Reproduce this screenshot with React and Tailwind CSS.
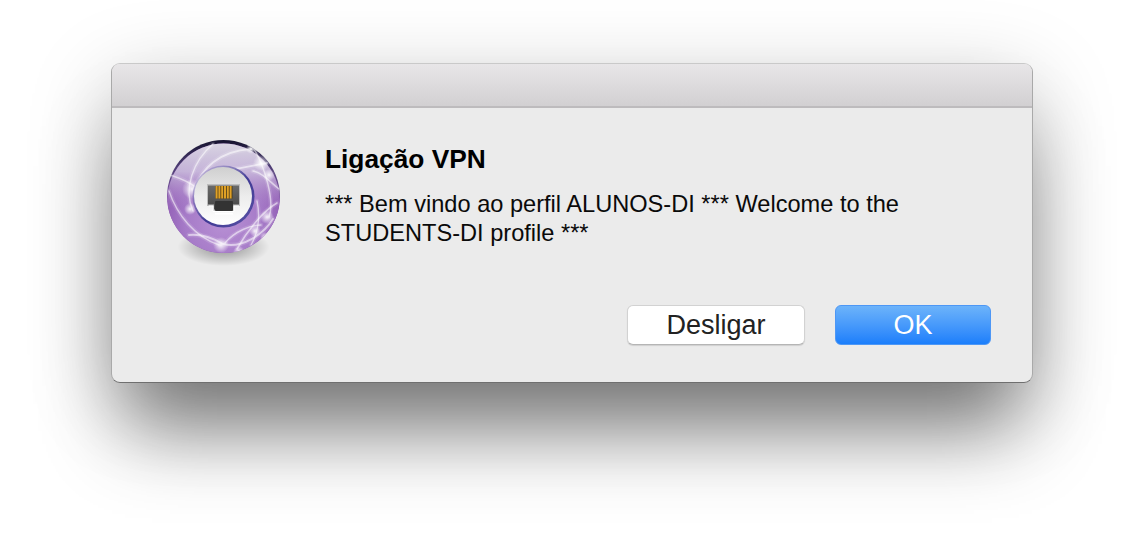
import React from "react";

const streaks = [
  ["M5 36 C18 40 26 44 33 50 C42 58 44 60 46 64", 1.8],
  ["M30 50 C36 30 54 12 86 10", 2],
  ["M28 72 C18 50 28 22 48 5", 1.5],
  ["M102 24 C90 26 76 30 66 30", 1.8],
  ["M88 8 C100 28 110 62 104 78", 1.5],
  ["M112 64 C98 72 82 92 72 110", 1.6],
  ["M24 96 C34 95 46 98 58 105 C76 110 98 96 108 80", 2],
  ["M4 52 C12 76 30 98 54 106", 1.4],
  ["M114 50 C104 42 98 34 88 32", 1.5],
  ["M92 62 C96 80 92 96 86 106", 1.4],
  ["M96 86 C86 86 70 92 60 104", 1.4],
];

const VpnIcon = () => (
  <svg width="120" height="132" viewBox="0 0 120 132" className="block">
    <defs>
      <radialGradient id="ballFill" cx="50%" cy="70%" r="62%">
        <stop offset="0%" stopColor="#b890d4" />
        <stop offset="55%" stopColor="#a67bc8" />
        <stop offset="85%" stopColor="#9360b6" />
        <stop offset="100%" stopColor="#7e4ea3" />
      </radialGradient>
      <linearGradient id="gloss" x1="0" y1="0" x2="0" y2="1">
        <stop offset="0%" stopColor="#d9d5e2" />
        <stop offset="25%" stopColor="#cfc3e0" stopOpacity="0.85" />
        <stop offset="58%" stopColor="#b592d2" stopOpacity="0" />
      </linearGradient>
      <linearGradient id="rim" x1="0" y1="0" x2="0" y2="1">
        <stop offset="0%" stopColor="#15122e" />
        <stop offset="22%" stopColor="#4a3b70" />
        <stop offset="55%" stopColor="#8a5cae" />
        <stop offset="100%" stopColor="#8a58ae" />
      </linearGradient>
      <linearGradient id="disc" x1="0" y1="0" x2="0" y2="1">
        <stop offset="0%" stopColor="#cfcfcf" />
        <stop offset="50%" stopColor="#ececec" />
        <stop offset="100%" stopColor="#ffffff" />
      </linearGradient>
      <linearGradient id="ring" x1="0" y1="0" x2="1" y2="1">
        <stop offset="0%" stopColor="#b5a8d6" stopOpacity="0.35" />
        <stop offset="55%" stopColor="#3f3a94" />
        <stop offset="100%" stopColor="#5a52a6" />
      </linearGradient>
      <linearGradient id="jack" x1="0" y1="0" x2="0" y2="1">
        <stop offset="0%" stopColor="#6a6a6a" />
        <stop offset="100%" stopColor="#454545" />
      </linearGradient>
      <radialGradient id="under" cx="50%" cy="50%" r="50%">
        <stop offset="0%" stopColor="#000" stopOpacity="0.4" />
        <stop offset="100%" stopColor="#000" stopOpacity="0" />
      </radialGradient>
      <radialGradient id="spark" cx="50%" cy="50%" r="50%">
        <stop offset="0%" stopColor="#fff" stopOpacity="0.9" />
        <stop offset="100%" stopColor="#fff" stopOpacity="0" />
      </radialGradient>
      <clipPath id="ballClip">
        <circle cx="58.5" cy="57.5" r="56.5" />
      </clipPath>
    </defs>
    <ellipse cx="58.5" cy="108" rx="46" ry="19" fill="url(#under)" />
    <circle cx="58.5" cy="57.5" r="56.5" fill="url(#rim)" />
    <g clipPath="url(#ballClip)">
      <circle cx="58.5" cy="60.5" r="56" fill="url(#ballFill)" />
      <circle cx="58.5" cy="60.5" r="56" fill="url(#gloss)" />
      <g fill="none" stroke="#fff" strokeLinecap="round">
        {streaks.map(([d, w]) => (
          <path key={d} d={d} strokeWidth={w + 3} strokeOpacity="0.12" />
        ))}
        {streaks.map(([d, w]) => (
          <path key={d} d={d} strokeWidth={w} strokeOpacity="0.55" />
        ))}
      </g>
      {[[27, 50, 10], [25, 70, 6], [56, 106, 8], [74, 113, 6], [90, 92, 6], [100, 98, 5], [102, 78, 7], [104, 36, 6], [96, 24, 8], [86, 10, 5]].map(([x, y, r]) => (
        <circle key={`${x}-${y}`} cx={x} cy={y} r={r} fill="url(#spark)" />
      ))}
    </g>
    <circle cx="58.5" cy="57.5" r="31" fill="url(#ring)" />
    <circle cx="58" cy="57" r="29" fill="url(#disc)" />
    <path d="M42 45 H75 V67 H69 V72 H48 V67 H42 Z" fill="#bdbdbd" />
    <path d="M43 46.5 H74 V65.5 H68 V70.5 H49 V65.5 H43 Z" fill="url(#jack)" />
    <rect x="50.5" y="47" width="17" height="12.5" fill="#4a3a18" />
    {[50.6, 53.4, 56.2, 59, 61.8, 64.6].map((x) => (
      <rect key={x} x={x} y="47" width="2" height="12.5" fill="#e0a126" />
    ))}
    <rect x="50" y="62" width="18" height="10" rx="1" fill="#333333" />
    <path d="M44 67 H48 V72.5 H69 V67 H74" fill="none" stroke="#ffffff" strokeWidth="1" />
    <rect x="50" y="74" width="18" height="1.5" fill="#ffffff" />
  </svg>
);

export default function App() {
  return (
    <div
      className="w-[1144px] h-[542px] bg-white pl-[111px] pt-[63px] overflow-hidden"
      style={{ fontFamily: '"Liberation Sans", Arial, sans-serif' }}
    >
      <div className="w-[922px] h-[320px] flex flex-col rounded-[9px] overflow-hidden bg-[#ebebeb] border border-[#a9a9a9] border-t-[#c9c9c9] border-b-[#6f6f6f] shadow-[0_62px_76px_-14px_rgba(0,0,0,0.44),0_20px_84px_rgba(0,0,0,0.22)]">
        <div className="h-[44px] shrink-0 bg-gradient-to-b from-[#e8e6e8] to-[#d2d0d2] border-b-2 border-[#bdbbbd]" />
        <div className="flex flex-1 min-h-0 pl-[53px] pr-[41px]">
          <div className="w-[160px] shrink-0 pt-[31px]">
            <VpnIcon />
          </div>
          <div className="flex-1 flex flex-col">
            <h1 className="mt-[36px] text-[26.3px] leading-[30px] font-bold text-black">Ligação VPN</h1>
            <p className="mt-[16px] w-[620px] text-[23.6px] leading-[29px] text-[#0a0a0a]">
              *** Bem vindo ao perfil ALUNOS-DI *** Welcome to the STUDENTS-DI profile ***
            </p>
            <div className="mt-auto mb-[37px] flex justify-end gap-[30px]">
              <button className="w-[178px] h-[40px] rounded-[6px] bg-white border border-[#d2d2d2] border-b-[#b5b5b5] shadow-[0_1px_1px_rgba(0,0,0,0.12)] text-[27px] leading-none text-[#222222]">
                Desligar
              </button>
              <button className="w-[156px] h-[40px] rounded-[6px] bg-gradient-to-b from-[#6cb3fa] to-[#1a7efb] border border-[#4d97f5] text-[27px] leading-none text-white">
                OK
              </button>
            </div>
          </div>
        </div>
      </div>
    </div>
  );
}
